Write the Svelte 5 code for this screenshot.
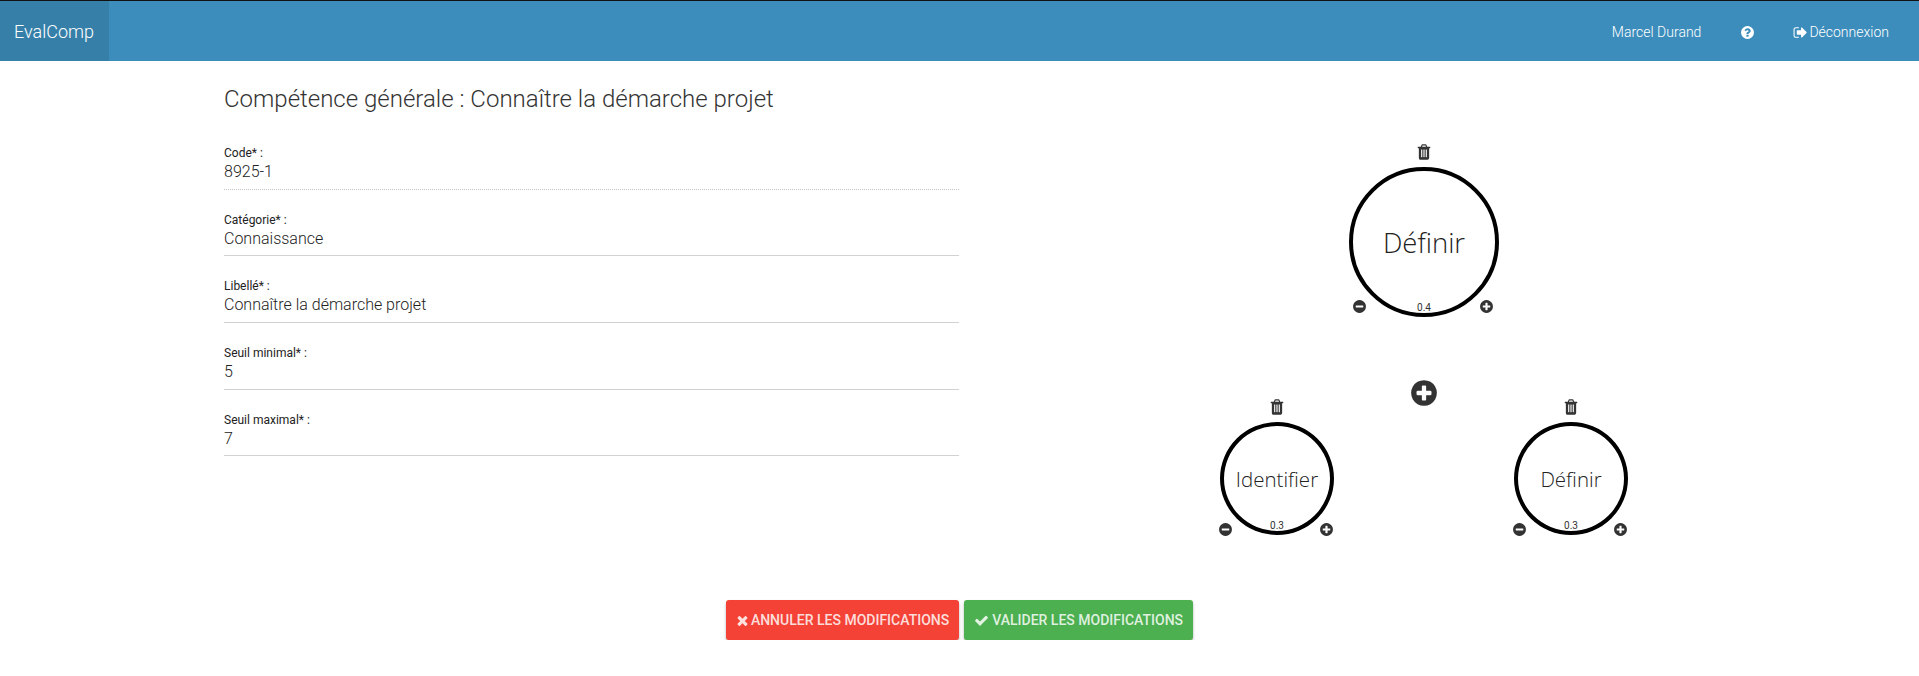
<script>
  const trash = "M704 1376v-704q0-14-9-23t-23-9h-64q-14 0-23 9t-9 23v704q0 14 9 23t23 9h64q14 0 23-9t9-23zm256 0v-704q0-14-9-23t-23-9h-64q-14 0-23 9t-9 23v704q0 14 9 23t23 9h64q14 0 23-9t9-23zm256 0v-704q0-14-9-23t-23-9h-64q-14 0-23 9t-9 23v704q0 14 9 23t23 9h64q14 0 23-9t9-23zm-544-992h448l-48-117q-7-9-17-11h-317q-10 2-17 11zm928 32v64q0 14-9 23t-23 9h-96v948q0 83-47 143.500t-113 60.500h-832q-66 0-113-58.500t-47-141.500v-952h-96q-14 0-23-9t-9-23v-64q0-14 9-23t23-9h309l70-167q15-37 54-63t79-26h320q40 0 79 26t54 63l70 167h309q14 0 23 9t9 23z";
  const circle = "zm320-64q0 209-103 385.500t-279.500 279.500-385.500 103-385.500-103-279.500-279.500-103-385.500 103-385.500 279.500-279.500 385.500-103 385.500 103 279.500 279.500 103 385.500z";
  const plus = "M1344 960v-128q0-26-19-45t-45-19h-256v-256q0-26-19-45t-45-19h-128q-26 0-45 19t-19 45v256h-256q-26 0-45 19t-19 45v128q0 26 19 45t45 19h256v256q0 26 19 45t45 19h128q26 0 45-19t19-45v-256h256q26 0 45-19t19-45" + circle;
  const minus = "M1344 960v-128q0-26-19-45t-45-19h-768q-26 0-45 19t-19 45v128q0 26 19 45t45 19h768q26 0 45-19t19-45" + circle;
  const question = "M1024 1376v-192q0-14-9-23t-23-9h-192q-14 0-23 9t-9 23v192q0 14 9 23t23 9h192q14 0 23-9t9-23zm256-672q0-88-55.500-163t-138.500-116-170-41q-243 0-371 213-15 24 8 42l132 100q7 6 19 6 16 0 25-12 53-68 86-92 34-24 86-24 48 0 85.500 26t37.500 59q0 38-20 61t-68 45q-63 28-115.500 86.500t-52.500 125.500v36q0 14 9 23t23 9h192q14 0 23-9t9-23q0-19 21.500-49.500t54.500-49.500q32-18 49-28.500t46-35 44.500-48 28-60.500 12.500-81" + "zm384 192q0 209-103 385.500t-279.500 279.500-385.500 103-385.500-103-279.500-279.500-103-385.500 103-385.500 279.500-279.500 385.500-103 385.500 103 279.500 279.500 103 385.500z";
  const signOut = "M704 1440q0 4 1 20t.5 26.500-3 23.500-10 19.500-20.500 6.500h-320q-119 0-203.500-84.500t-84.500-203.500v-704q0-119 84.500-203.500t203.500-84.500h320q13 0 22.500 9.500t9.500 22.500q0 4 1 20t.5 26.500-3 23.500-10 19.500-20.500 6.500h-320q-66 0-113 47t-47 113v704q0 66 47 113t113 47h312l11.500 1 11.500 3 8 5.500 7 9 2 13.500zm928-544q0 26-19 45l-544 544q-19 19-45 19t-45-19-19-45v-288h-448q-26 0-45-19t-19-45v-384q0-26 19-45t45-19h448v-288q0-26 19-45t45-19 45 19l544 544q19 19 19 45z";
  const times = "M1490 1322q0 40-28 68l-136 136q-28 28-68 28t-68-28l-294-294-294 294q-28 28-68 28t-68-28l-136-136q-28-28-28-68t28-68l294-294-294-294q-28-28-28-68t28-68l136-136q28-28 68-28t68 28l294 294 294-294q28-28 68-28t68 28l136 136q28 28 28 68t-28 68l-294 294 294 294q28 28 28 68z";
  const check = "M1671 566q0 40-28 68l-724 724-136 136q-28 28-68 28t-68-28l-136-136-362-362q-28-28-28-68t28-68l136-136q28-28 68-28t68 28l294 295 656-657q28-28 68-28t68 28l136 136q28 28 28 68z";

  const fields = [
    { label: "Code* :", value: "8925-1", locked: true },
    { label: "Catégorie* :", value: "Connaissance" },
    { label: "Libellé* :", value: "Connaître la démarche projet" },
    { label: "Seuil minimal* :", value: "5" },
    { label: "Seuil maximal* :", value: "7" }
  ];
  const nodes = [
    { name: "Définir", weight: "0.4", left: 389, top: 49, big: true },
    { name: "Identifier", weight: "0.3", left: 260, top: 304, big: false },
    { name: "Définir", weight: "0.3", left: 554, top: 304, big: false }
  ];
</script>

<nav class="navbar">
  <div class="brand">EvalComp</div>
  <div class="nav-right">
    <span class="user">Marcel Durand</span>
    <svg class="q" viewBox="0 0 1792 1792"><path d={question} /></svg>
    <span class="logout"><svg viewBox="0 0 1792 1792"><path d={signOut} /></svg>Déconnexion</span>
  </div>
</nav>

<main class="page">
  <h1>Compétence générale : Connaître la démarche projet</h1>
  <div class="columns">
    <form class="form">
      {#each fields as f}
        <div class="field" class:locked={f.locked}>
          <div class="label">{f.label}</div>
          <div class="value">{f.value}</div>
        </div>
      {/each}
    </form>
    <div class="diagram">
      {#each nodes as n}
        <div class="node" class:big={n.big} style="left:{n.left}px;top:{n.top}px">
          <svg class="trash" viewBox="0 0 1792 1792" preserveAspectRatio="none"><path d={trash} /></svg>
          <div class="ring">
            <span class="name">{n.name}</span>
            <span class="weight">{n.weight}</span>
          </div>
          <svg class="minus" viewBox="0 0 1792 1792"><path d={minus} /></svg>
          <svg class="plus" viewBox="0 0 1792 1792"><path d={plus} /></svg>
        </div>
      {/each}
      <svg class="add" viewBox="0 0 1792 1792"><path d={plus} /></svg>
    </div>
  </div>
  <div class="actions">
    <button class="btn red" type="button"><svg viewBox="0 0 1792 1792"><path d={times} /></svg>Annuler les modifications</button>
    <button class="btn green" type="button"><svg viewBox="0 0 1792 1792"><path d={check} /></svg>Valider les modifications</button>
  </div>
</main>

<style>
  :global(body) {
    margin: 0;
    background: #fff;
    font-family: Roboto, "Liberation Sans", sans-serif;
    color: #333;
  }
  .navbar {
    height: 60px;
    border-top: 1px solid #111;
    background: #3c8dbc;
    display: flex;
    justify-content: space-between;
    color: #fff;
  }
  .brand {
    width: 109px;
    background: #367fa9;
    font-size: 18px;
    font-weight: 300;
    padding-left: 14px;
    box-sizing: border-box;
    line-height: 62px;
  }
  .nav-right {
    display: flex;
    align-items: center;
    font-size: 14px;
    font-weight: 300;
    padding-right: 30px;
    padding-top: 2px;
    box-sizing: border-box;
  }
  .nav-right svg { fill: #fff; }
  .q { width: 15px; height: 15px; margin-left: 39px; }
  .logout { display: flex; align-items: center; margin-left: 38px; }
  .logout svg { width: 15px; height: 15px; margin-right: 1px; }
  .page { padding: 0 224px; }
  h1 {
    margin: 0;
    padding-top: 23px;
    height: 34px;
    font-size: 24px;
    font-weight: 300;
    line-height: 30px;
    color: #333;
  }
  .columns { display: flex; height: 482px; }
  .form { width: 735px; padding-top: 5px; }
  .field { height: 65.7px; border-bottom: 1px solid #d2d2d2; }
  .field.locked { border-bottom: 1px dotted #c4c4c4; }
  .label {
    font-size: 12px;
    line-height: 14px;
    padding-top: 23px;
    color: #222;
  }
  .value {
    font-size: 16px;
    font-weight: 300;
    line-height: 22px;
    margin-top: 1px;
    color: #222;
  }
  .diagram { position: relative; width: 600px; margin-left: 1px; }
  .node { position: absolute; width: 114px; height: 113px; }
  .node.big { width: 150px; height: 150px; }
  .ring {
    width: 100%;
    height: 100%;
    box-sizing: border-box;
    border: 4px solid #000;
    border-radius: 50%;
    display: flex;
    align-items: center;
    justify-content: center;
    position: relative;
    font-family: "Open Sans", sans-serif;
    font-weight: 300;
    font-size: 20.5px;
    color: #222;
  }
  .big .ring { font-size: 27.5px; }
  .weight {
    position: absolute;
    bottom: -1px;
    left: 0;
    right: 0;
    text-align: center;
    font-family: Roboto, sans-serif;
    font-size: 10px;
    line-height: 12px;
    font-weight: 400;
    color: #333;
  }
  .trash { position: absolute; width: 16px; height: 18px; top: -24px; left: 50%; margin-left: -8px; fill: #333; }
  .minus, .plus { position: absolute; width: 15px; height: 15px; bottom: -2px; fill: #333; }
  .minus { left: -2px; }
  .plus { right: 0; }
  .big .minus { left: 3px; bottom: 3px; }
  .big .plus { right: 5px; bottom: 3px; }
  .add { position: absolute; width: 30px; height: 30px; left: 449px; top: 260px; fill: #333; }
  .actions { display: flex; justify-content: center; gap: 5px; margin: 0 -224px; }
  .btn {
    height: 40px;
    border: 0;
    border-radius: 3px;
    color: rgba(255,255,255,.84);
    font-family: Roboto, sans-serif;
    font-size: 14px;
    font-weight: 500;
    text-transform: uppercase;
    padding: 0 10px;
    box-shadow: 0 2px 3px rgba(0,0,0,.3);
    display: flex;
    align-items: center;
  }
  .btn svg { width: 15px; height: 15px; fill: rgba(255,255,255,.84); }
  .red svg { margin-left: -1px; margin-right: 1px; }
  .green svg { margin-right: 3px; }
  .red { background: #f44336; }
  .green { background: #4caf50; }
</style>
